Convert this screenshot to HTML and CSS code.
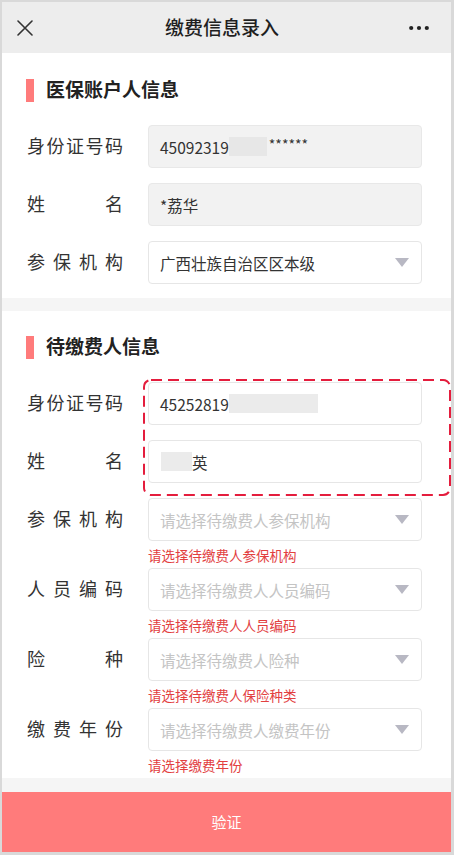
FILE: index.html
```html
<!DOCTYPE html>
<html lang="zh-CN">
<head>
<meta charset="utf-8">
<title>缴费信息录入</title>
<link rel="stylesheet" href="styles.css">
</head>
<body>
<div class="app">
  <header class="navbar">
    <svg class="nav-close" width="16" height="16" viewBox="0 0 16 16" aria-hidden="true">
      <path d="M1 1 L15 15 M15 1 L1 15" stroke="#333" stroke-width="1.6" fill="none" stroke-linecap="round"/>
    </svg>
    <h1 class="nav-title">缴费信息录入</h1>
    <svg class="nav-more" width="20" height="6" viewBox="0 0 20 6" aria-hidden="true">
      <circle cx="2.2" cy="3" r="2.1" fill="#222"/>
      <circle cx="10" cy="3" r="2.1" fill="#222"/>
      <circle cx="17.8" cy="3" r="2.1" fill="#222"/>
    </svg>
  </header>

  <main class="content">
    <section class="card card-account">
      <h2 class="card-title"><span class="title-bar"></span><span class="title-text">医保账户人信息</span></h2>
      <div class="field">
        <label class="field-label">身份证号码</label>
        <div class="input input-readonly"><span class="value">45092319</span><span class="mask mask-id1"></span><span class="value stars">******</span></div>
      </div>
      <div class="field">
        <label class="field-label">姓名</label>
        <div class="input input-readonly"><span class="value">*荔华</span></div>
      </div>
      <div class="field field-last">
        <label class="field-label">参保机构</label>
        <div class="input input-select"><span class="value">广西壮族自治区区本级</span><span class="caret"></span></div>
      </div>
    </section>

    <section class="card card-payer">
      <h2 class="card-title"><span class="title-bar"></span><span class="title-text">待缴费人信息</span></h2>
      <div class="field">
        <label class="field-label">身份证号码</label>
        <div class="input"><span class="value">45252819</span><span class="mask mask-id2"></span></div>
      </div>
      <div class="field">
        <label class="field-label">姓名</label>
        <div class="input"><span class="mask mask-name"></span><span class="value">英</span></div>
      </div>
      <div class="field-group">
        <div class="field">
          <label class="field-label">参保机构</label>
          <div class="input input-select"><span class="placeholder">请选择待缴费人参保机构</span><span class="caret"></span></div>
        </div>
        <p class="error">请选择待缴费人参保机构</p>
      </div>
      <div class="field-group">
        <div class="field">
          <label class="field-label">人员编码</label>
          <div class="input input-select"><span class="placeholder">请选择待缴费人人员编码</span><span class="caret"></span></div>
        </div>
        <p class="error">请选择待缴费人人员编码</p>
      </div>
      <div class="field-group">
        <div class="field">
          <label class="field-label">险种</label>
          <div class="input input-select"><span class="placeholder">请选择待缴费人险种</span><span class="caret"></span></div>
        </div>
        <p class="error">请选择待缴费人保险种类</p>
      </div>
      <div class="field-group">
        <div class="field">
          <label class="field-label">缴费年份</label>
          <div class="input input-select"><span class="placeholder">请选择待缴费人缴费年份</span><span class="caret"></span></div>
        </div>
        <p class="error">请选择缴费年份</p>
      </div>

      <svg class="highlight" width="308" height="117" viewBox="0 0 308 117" aria-hidden="true">
        <rect x="1" y="1" width="306" height="115" rx="7" ry="7" fill="none" stroke="#e41d3d" stroke-width="2" stroke-dasharray="11 6"/>
      </svg>
    </section>
  </main>

  <button class="submit" type="button">验证</button>
</div>
</body>
</html>
```

FILE: styles.css
```css
* {
  box-sizing: border-box;
}

html, body {
  margin: 0;
  padding: 0;
}

body {
  font-family: "Noto Sans CJK SC", "Noto Sans", "Liberation Sans", sans-serif;
  color: #333;
  background: #d9d9d9;
}

.app {
  width: 454px;
  height: 855px;
  border-style: solid;
  border-color: #d9d9d9;
  border-width: 2px 3px 3px 2px;
  background: #f5f5f5;
  display: flex;
  flex-direction: column;
  overflow: hidden;
}

/* nav bar */
.navbar {
  height: 51px;
  flex: 0 0 51px;
  background: #ededed;
  display: flex;
  align-items: center;
  justify-content: space-between;
  padding: 0 22px 0 15px;
}

.nav-close {
  display: block;
}

.nav-title {
  margin: 0 0 3px;
  font-size: 19px;
  font-weight: 500;
  color: #1f1f1f;
  line-height: 1;
  padding-left: 2px;
}

.nav-more {
  display: block;
}

/* content */
.content {
  flex: 1 1 auto;
  display: flex;
  flex-direction: column;
  gap: 13px;
}

.card {
  background: #fff;
  padding: 0 29px 0 24px;
  position: relative;
}

.card-account {
  padding-top: 24px;
  padding-bottom: 14px;
}

.card-payer {
  padding-top: 23px;
}

.card-title {
  margin: 0 0 22px;
  height: 26px;
  display: flex;
  align-items: center;
  gap: 12px;
  font-size: 19px;
  font-weight: 700;
  color: #222;
  line-height: 1;
}

.title-text {
  padding-bottom: 3px;
}

.title-bar {
  width: 8px;
  height: 23px;
  background: #ff7b7b;
}

.field {
  display: flex;
  align-items: center;
  height: 43px;
  margin-bottom: 15px;
}

.field-last {
  margin-bottom: 0;
}

.field-group .field {
  margin-bottom: 0;
}

.field-label {
  width: 97px;
  flex: 0 0 97px;
  margin-right: 25px;
  padding-left: 1px;
  padding-bottom: 3px;
  font-size: 18px;
  color: #333;
  text-align: justify;
  text-align-last: justify;
  line-height: 1;
}

.input {
  flex: 1 1 auto;
  height: 43px;
  border: 1px solid #e6e6e6;
  border-radius: 4px;
  background: #fff;
  display: flex;
  align-items: center;
  padding: 0 11px;
  font-size: 15.5px;
  color: #333;
}

.input-readonly {
  background: #f2f2f2;
  border-color: #e8e8e8;
}

.value {
  white-space: nowrap;
}

.stars {
  font-size: 14px;
  padding-left: 2px;
  margin-top: -6px;
}

.placeholder {
  color: #c4c4c4;
  white-space: nowrap;
}

.mask {
  display: inline-block;
  height: 19px;
  background: #e8e8e8;
}

.input-readonly .mask {
  background: #e7e7e7;
}

.mask-id1 {
  width: 38px;
}

.mask-id2 {
  width: 89px;
  background: #ebebeb;
}

.mask-name {
  width: 31px;
  margin-left: 1px;
  background: #ebebeb;
}

.input-select {
  justify-content: space-between;
}

.caret {
  width: 0;
  height: 0;
  border-left: 7px solid transparent;
  border-right: 7px solid transparent;
  border-top: 9px solid #b8b8c3;
  margin-right: 1px;
}

.error {
  margin: 0 0 0 122px;
  height: 27px;
  line-height: 28px;
  font-size: 13.5px;
  color: #e2403f;
}

.highlight {
  position: absolute;
  left: 141px;
  top: 68px;
  display: block;
}

/* submit */
.submit {
  flex: 0 0 60px;
  height: 60px;
  width: 100%;
  border: 0;
  margin: 0;
  background: #ff7b7b;
  color: #fff;
  font-family: "Noto Sans CJK SC", "Noto Sans", sans-serif;
  font-size: 15px;
  padding: 0 0 2px;
}
```
